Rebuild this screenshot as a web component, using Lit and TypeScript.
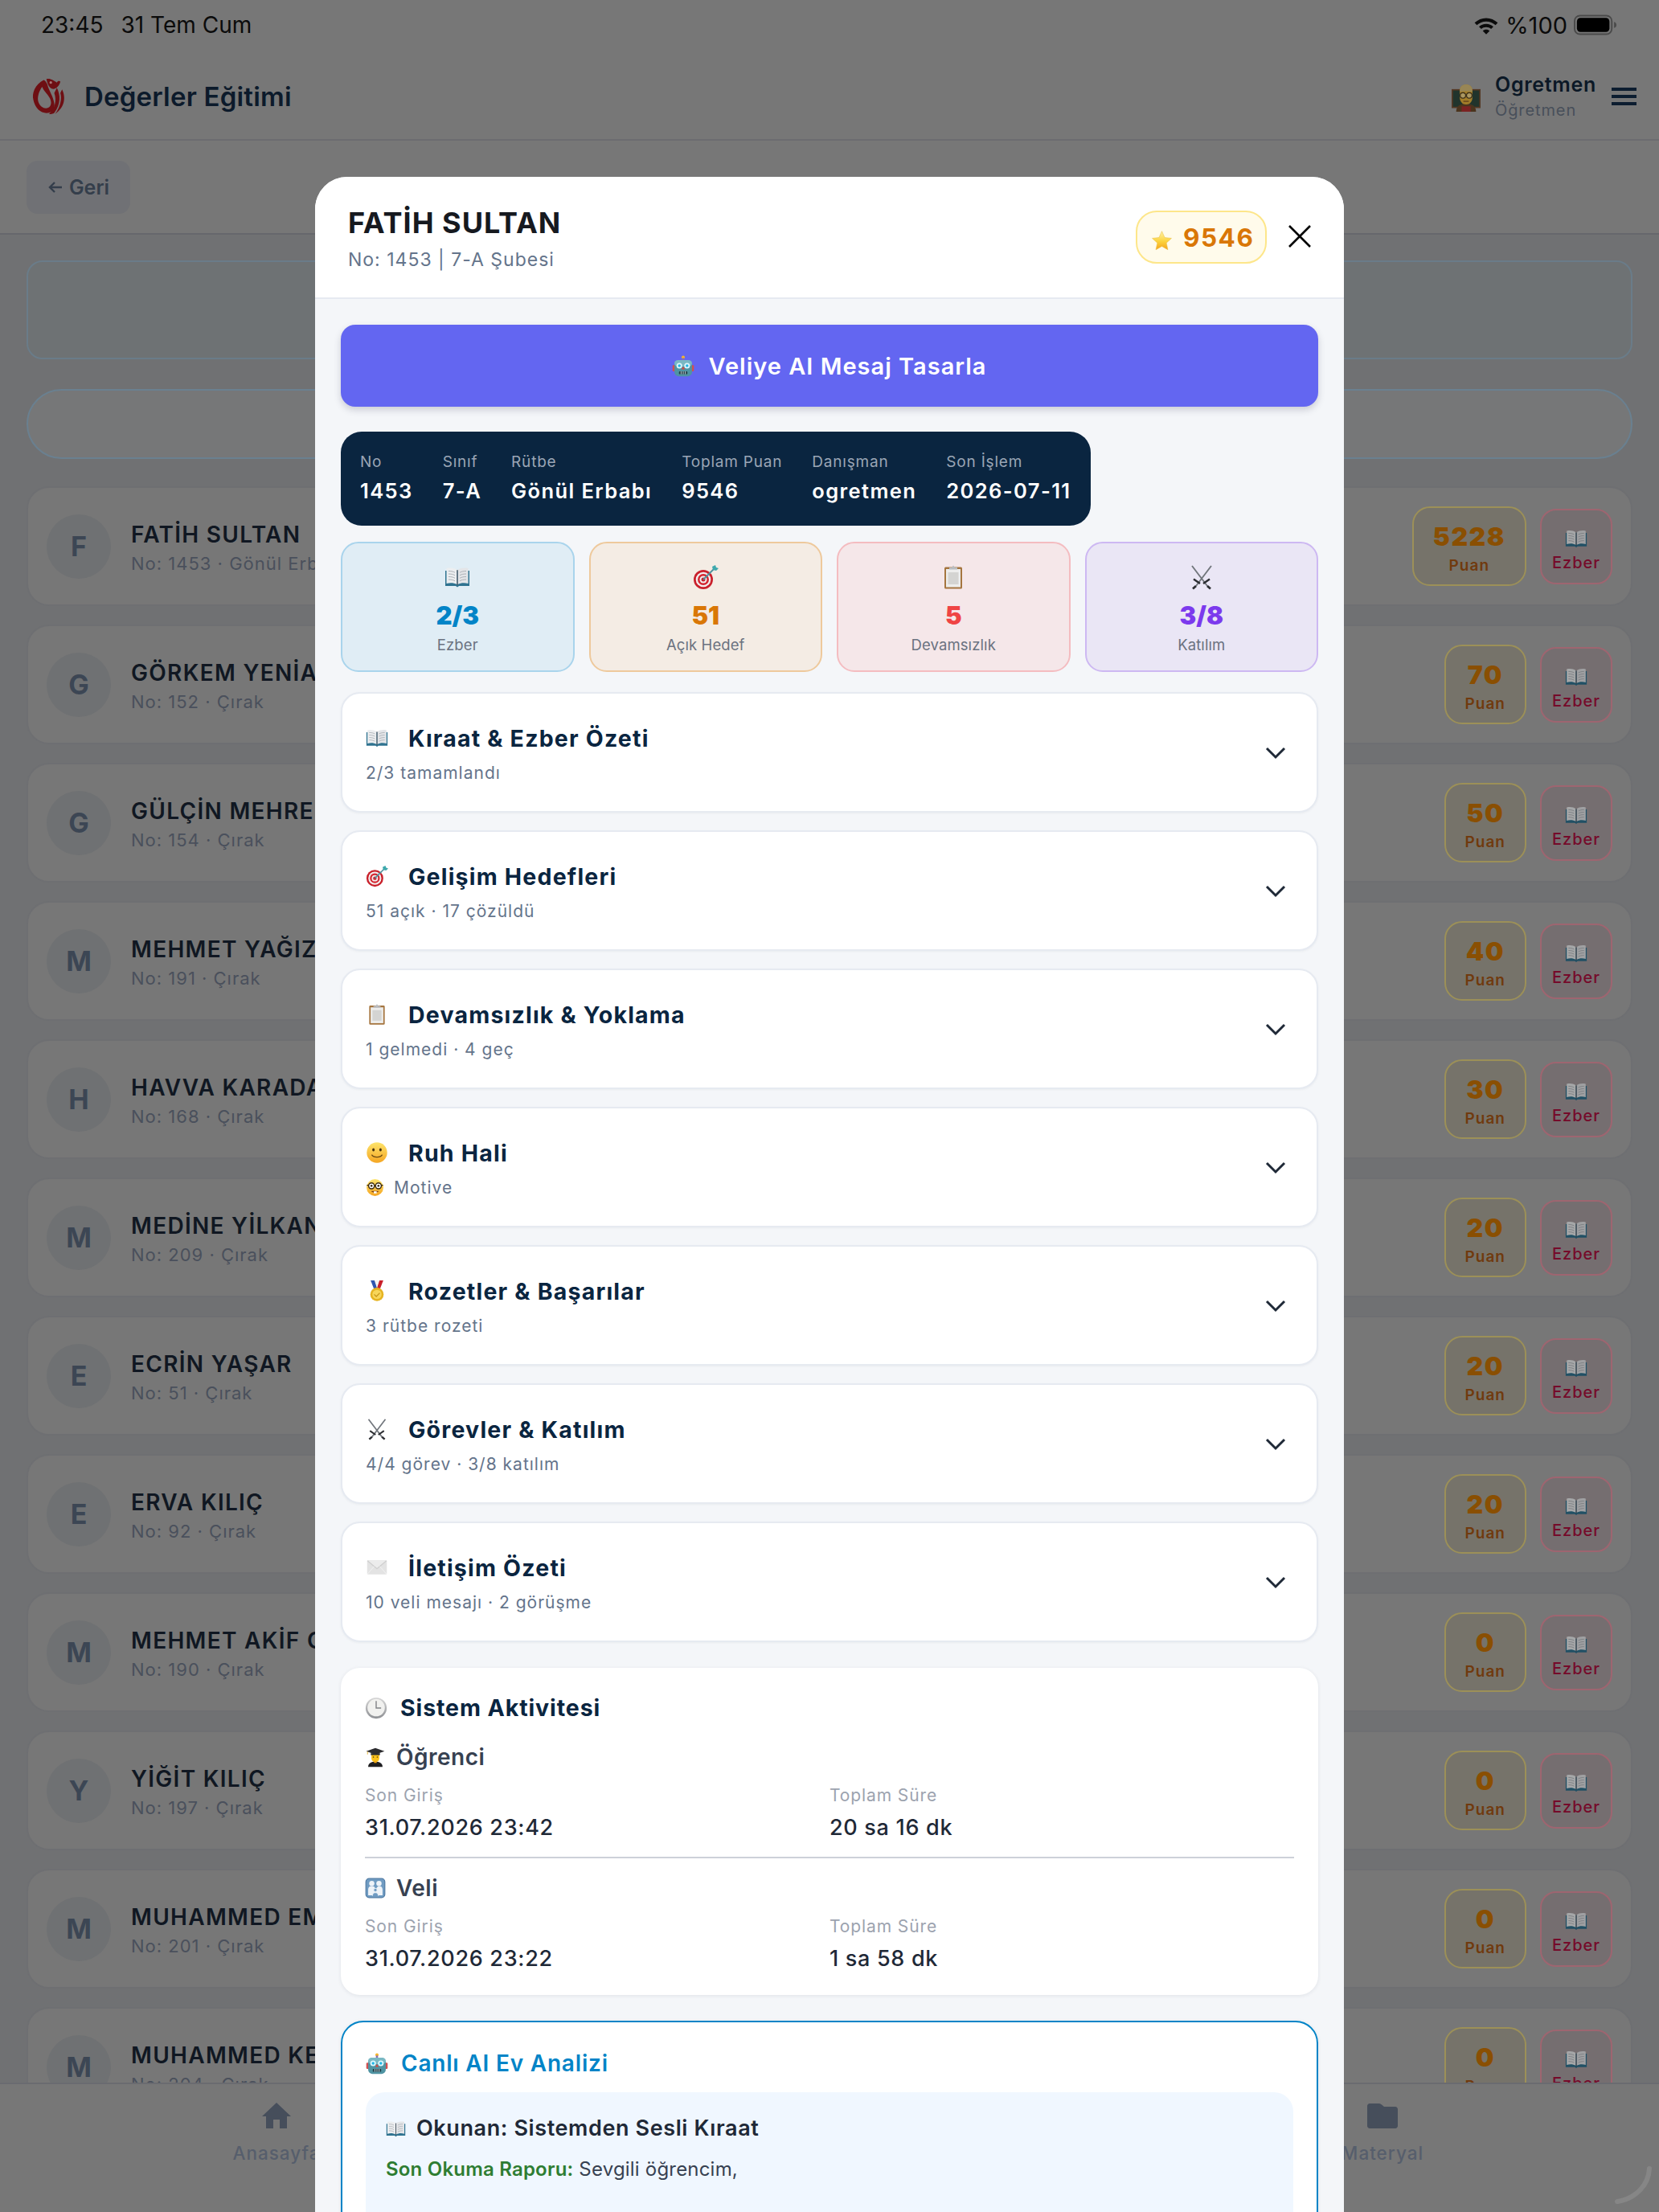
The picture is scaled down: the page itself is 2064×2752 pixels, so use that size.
import { LitElement, html, css, svg } from "lit";
import { customElement } from "lit/decorators.js";

const E = {
  book: svg`<path d="M1 8h30v19H18l-2 1.500-2-1.500H1z" fill="#2f7390"/><path d="M2.500 5C7 4 12 4.500 15.500 7v18C12 23 7 22.500 2.500 24z" fill="#eceef0"/><path d="M29.500 5C25 4 20 4.500 16.500 7v18c3.500-2 8.500-2.500 13-1z" fill="#e3e5e8"/><path d="M5 8.500c3 0 6 .5 8 1.800M5 12c3 0 6 .5 8 1.800M5 15.500c3 0 6 .5 8 1.800M5 19c3 0 6 .5 8 1.800M27 8.500c-3 0-6 .5-8 1.800M27 12c-3 0-6 .5-8 1.800M27 15.500c-3 0-6 .5-8 1.800M27 19c-3 0-6 .5-8 1.800" stroke="#a5a9b0" stroke-width=".9" fill="none"/><path d="M16 7v19" stroke="#4b5460" stroke-width="1.200"/>`,
  target: svg`<circle cx="13" cy="19" r="12" fill="#c9202b"/><circle cx="13" cy="19" r="9.300" fill="#f3eeee"/><circle cx="13" cy="19" r="7" fill="#d5252f"/><circle cx="13" cy="19" r="4.500" fill="#f3eeee"/><circle cx="13" cy="19" r="2.500" fill="#c9202b"/><path d="M13 19 26 6" stroke="#4e8f9b" stroke-width="1.800"/><path d="M24 3l1 4 4 1 3-3-3-1-1-3z" fill="#3fa9ad"/>`,
  clip: svg`<rect x="5" y="3.500" width="22" height="27" rx="1.500" fill="#a5753f"/><rect x="7" y="6" width="18" height="22.500" fill="#ededec"/><rect x="9.500" y="10" width="13" height="15" fill="#d4d4d2"/><path d="M11 6V4h3l2-2.500L18 4h3v2.500H11z" fill="#b9bcc0"/>`,
  swords: svg`<path d="M4 2 23 27M28 2 9 27" stroke="#70757b" stroke-width="1.900" fill="none"/><path d="M18 24l8-5.500M14 24 6 18.500" stroke="#2b2d31" stroke-width="2.400"/><path d="M23 27l4 3.500M9 27l-4 3.500" stroke="#2b2d31" stroke-width="2.800"/>`,
  smile: svg`<defs><linearGradient id="gs" x1="0" y1="0" x2="0" y2="1"><stop offset="0" stop-color="#fde36a"/><stop offset="1" stop-color="#f5a623"/></linearGradient></defs><circle cx="16" cy="16" r="14.500" fill="url(#gs)"/><ellipse cx="11" cy="12" rx="1.700" ry="2.200" fill="#4a3410"/><ellipse cx="21" cy="12" rx="1.700" ry="2.200" fill="#4a3410"/><path d="M8.500 19c3 4.500 12 4.500 15 0" stroke="#6b4a12" stroke-width="1.500" fill="none"/>`,
  nerd: svg`<defs><linearGradient id="gn" x1="0" y1="0" x2="0" y2="1"><stop offset="0" stop-color="#fde36a"/><stop offset="1" stop-color="#f5a623"/></linearGradient></defs><circle cx="16" cy="16" r="14.500" fill="url(#gn)"/><circle cx="10" cy="13" r="5" fill="#fff" stroke="#3a2a10" stroke-width="2"/><circle cx="22" cy="13" r="5" fill="#fff" stroke="#3a2a10" stroke-width="2"/><path d="M15 13h2M2 12h3M27 12h3" stroke="#3a2a10" stroke-width="2"/><circle cx="10" cy="13" r="1.800" fill="#3a2a10"/><circle cx="22" cy="13" r="1.800" fill="#3a2a10"/><path d="M9 22c4 4 10 4 14 0z" fill="#7a3c14"/><rect x="14" y="22.500" width="5" height="3.500" fill="#fff"/>`,
  medal: svg`<path d="M7 1h6l4 13h-5z" fill="#2f56b0"/><path d="M25 1h-6l-4 13h5z" fill="#c9202b"/><path d="M12.500 1h7L16 12z" fill="#f2f2f2"/><circle cx="16" cy="21" r="9.500" fill="#e6b422"/><circle cx="16" cy="21" r="6.500" fill="#f7d65a"/><path d="M12 21l3 3 5-5" stroke="#c9971a" stroke-width="1.500" fill="none"/>`,
  mail: svg`<rect x="2" y="6" width="28" height="20" rx="1.500" fill="#e3e3e3"/><path d="M2.500 6.500 16 18 29.500 6.500" stroke="#cfcfcf" stroke-width="1.500" fill="#ececec"/><path d="M2.500 25.500 12 14.500M29.500 25.500 20 14.500" stroke="#f4f4f4" stroke-width="1"/>`,
  clock: svg`<defs><linearGradient id="gc" x1="0" y1="0" x2="0" y2="1"><stop offset="0" stop-color="#d8d8d8"/><stop offset="1" stop-color="#8e9094"/></linearGradient></defs><circle cx="16" cy="16" r="15" fill="url(#gc)"/><circle cx="16" cy="15.500" r="12.300" fill="#f1f1ef"/><path d="M16 6v10h7" stroke="#808286" stroke-width="1.600" fill="none"/>`,
  student: svg`<path d="M5 31c0-6 5-8 11-8s11 2 11 8z" fill="#1f1f22"/><path d="M10 11h12v7a6 6 0 0 1-12 0z" fill="#fcc21b"/><rect x="14" y="22" width="4" height="3" fill="#f0a818"/><path d="M16 2 2 7l14 5 14-5z" fill="#2c2c2f"/><path d="M9 10h14v3H9z" fill="#2c2c2f"/><path d="M4 7.500V12" stroke="#e0a818" stroke-width="1"/><circle cx="13" cy="16" r="1" fill="#4a3410"/><circle cx="19" cy="16" r="1" fill="#4a3410"/>`,
  family: svg`<rect x="1.500" y="1.500" width="29" height="29" rx="5" fill="#6f9bc2" stroke="#4f7aa3" stroke-width="1.500"/><circle cx="10.500" cy="9" r="4" fill="#eef3f8"/><circle cx="21.500" cy="9" r="4" fill="#eef3f8"/><path d="M5 27v-9c0-3 2-5 5.500-5s5.500 2 5.500 5 2-5 5.500-5 5.500 2 5.500 5v9z" fill="#eef3f8"/><circle cx="16" cy="19" r="2.600" fill="#6f9bc2" stroke="#eef3f8"/><path d="M11.500 28c0-3.500 2-5 4.500-5s4.500 1.500 4.500 5" fill="#6f9bc2" stroke="#eef3f8"/>`,
  robot: svg`<circle cx="16" cy="4" r="2.300" fill="#f5b52e"/><rect x="14.500" y="5" width="3" height="4" fill="#8b6fb0"/><rect x=".8" y="15" width="4" height="9" rx="1.500" fill="#d05050"/><rect x="27.200" y="15" width="4" height="9" rx="1.500" fill="#d05050"/><rect x="3.500" y="8" width="25" height="23" rx="6" fill="#4f94a3"/><rect x="3.500" y="8" width="25" height="9" rx="5" fill="#79b8c3"/><circle cx="10.500" cy="16" r="4" fill="#dff6fb"/><circle cx="21.500" cy="16" r="4" fill="#dff6fb"/><circle cx="10.500" cy="16" r="2" fill="#1fb6e6"/><circle cx="21.500" cy="16" r="2" fill="#1fb6e6"/><path d="M16 17l2.500 4h-5z" fill="#d9483f"/><rect x="10" y="24" width="12" height="4" rx="1" fill="#25434c"/><path d="M13 24v4M16 24v4M19 24v4" stroke="#cfd8dc" stroke-width="1"/>`,
  star: svg`<defs><linearGradient id="gst" x1="0" y1="0" x2="0" y2="1"><stop offset="0" stop-color="#fff3a8"/><stop offset=".55" stop-color="#fcd33d"/><stop offset="1" stop-color="#f5a41d"/></linearGradient></defs><path d="M16 2l4.200 9.300 10 1.100-7.500 6.800 2.100 10L16 24.200 7.200 29.200l2.100-10-7.500-6.800 10-1.100z" fill="url(#gst)" stroke="#e8b93a" stroke-width=".6"/>`,
  teacher: svg`<rect x="0" y="7" width="32" height="21" fill="#7a5233"/><rect x="1.500" y="8.500" width="29" height="18" fill="#2f4a3f"/><path d="M5 32c0-7 5-9 11-9s11 2 11 9z" fill="#6b4a2a"/><rect x="11" y="26" width="10" height="6" fill="#b03030"/><path d="M9 9c0-5 3-7 7-7s7 2 7 7v7c0 5-3 8-7 8s-7-3-7-8z" fill="#e8b23a"/><path d="M9 10c0-6 3-8 7-8s7 2 7 8c-4-1-10-1-14 0z" fill="#d9c07a"/><circle cx="12.500" cy="14" r="3" fill="#f6d98a" stroke="#4a3a20"/><circle cx="19.500" cy="14" r="3" fill="#f6d98a" stroke="#4a3a20"/><path d="M13 20.500h6" stroke="#7a4a20" stroke-width="1"/>`,
};
type EK = keyof typeof E;
const emo = (k: EK, cls = "") => html`<svg class="emo ${cls}" viewBox="0 0 32 32" aria-hidden="true">${E[k]}</svg>`;

const ROWS = [
  ["F", "FATİH SULTAN", "No: 1453 · Gönül Erbabı", "5228"],
  ["G", "GÖRKEM YENİAY", "No: 152 · Çırak", "70"],
  ["G", "GÜLÇİN MEHREN", "No: 154 · Çırak", "50"],
  ["M", "MEHMET YAĞIZ", "No: 191 · Çırak", "40"],
  ["H", "HAVVA KARADAĞ", "No: 168 · Çırak", "30"],
  ["M", "MEDİNE YİLKAN", "No: 209 · Çırak", "20"],
  ["E", "ECRİN YAŞAR", "No: 51 · Çırak", "20"],
  ["E", "ERVA KILIÇ", "No: 92 · Çırak", "20"],
  ["M", "MEHMET AKİF G", "No: 190 · Çırak", "0"],
  ["Y", "YİĞİT KILIÇ", "No: 197 · Çırak", "0"],
  ["M", "MUHAMMED EM", "No: 201 · Çırak", "0"],
  ["M", "MUHAMMED KE", "No: 204 · Çırak", "0"],
];
const INFO = [
  ["No", "1453"], ["Sınıf", "7-A"], ["Rütbe", "Gönül Erbabı"],
  ["Toplam Puan", "9546"], ["Danışman", "ogretmen"], ["Son İşlem", "2026-07-11"],
];
const STATS: [EK, string, string, string][] = [
  ["book", "2/3", "Ezber", "blue"],
  ["target", "51", "Açık Hedef", "orange"],
  ["clip", "5", "Devamsızlık", "red"],
  ["swords", "3/8", "Katılım", "purple"],
];
const ACC: [EK, string, any][] = [
  ["book", "Kıraat & Ezber Özeti", "2/3 tamamlandı"],
  ["target", "Gelişim Hedefleri", "51 açık · 17 çözüldü"],
  ["clip", "Devamsızlık & Yoklama", "1 gelmedi · 4 geç"],
  ["smile", "Ruh Hali", html`${emo("nerd", "e-nerd")}Motive`],
  ["medal", "Rozetler & Başarılar", "3 rütbe rozeti"],
  ["swords", "Görevler & Katılım", "4/4 görev · 3/8 katılım"],
  ["mail", "İletişim Özeti", "10 veli mesajı · 2 görüşme"],
];

@customElement("app-root")
export class AppRoot extends LitElement {
  static styles = css`
    :host { display: block; width: 2064px; height: 2752px; position: relative; overflow: hidden; font-family: Inter, "Noto Sans", sans-serif; background: #707173; }
    * { box-sizing: border-box; }
    svg { display: block; flex: none; }
    .emo { width: 28px; height: 28px; }
    .dim { filter: brightness(.7); }

    .page { height: 100%; display: flex; flex-direction: column; }
    .status { height: 62px; flex: none; background: #777; display: flex; align-items: center; justify-content: space-between; padding: 0 52px 0 51px; color: #0b0b0b; font-size: 28px; }
    .status .left { display: flex; gap: 22px; }
    .status .right { display: flex; align-items: center; gap: 8px; font-size: 29px; }
    .wifi { width: 32px; height: 26px; }
    .batt { width: 54px; height: 26px; }
    .top { height: 113px; flex: none; background: #777; border-bottom: 2px solid #6c6c70; display: flex; align-items: center; padding: 4px 28px 0 38px; }
    .logo { width: 46px; height: 52px; margin-right: 21px; }
    .brand { font-size: 33px; font-weight: 600; color: #0c1a2b; letter-spacing: .2px; }
    .user { margin-left: auto; display: flex; align-items: center; }
    .e-teacher { width: 36px; height: 36px; margin-right: 18px; margin-top: 2px; }
    .uname { font-size: 25px; font-weight: 600; color: #0b1826; letter-spacing: .7px; }
    .urole { font-size: 20px; color: #484f5a; letter-spacing: .9px; margin-top: 5px; }
    .burger { width: 31px; margin-left: 19px; height: 22px; display: flex; flex-direction: column; justify-content: space-between; }
    .burger i { display: block; height: 4px; background: #0c1d30; }
    .sub { height: 117px; flex: none; background: #777; border-bottom: 2px solid #66676c; display: flex; align-items: center; padding: 0 33px; }
    .back { width: 129px; height: 66px; border-radius: 14px; background: #707175; color: #343e4b; font-size: 25px; font-weight: 600; display: flex; align-items: center; justify-content: center; gap: 7px; }
    .back svg { width: 20px; height: 20px; }
    .main { flex: 1; min-height: 0; overflow: hidden; padding: 32px 33px 0; }
    .note { height: 123px; border-radius: 20px; border: 2px solid #6a7c89; background: #6e7274; }
    .pill { height: 87px; margin-top: 37px; border-radius: 44px; border: 2px solid #6a8090; background: #767778; }
    .list { margin-top: 34px; display: flex; flex-direction: column; gap: 23px; }
    .row { height: 149px; flex: none; border-radius: 28px; background: #777; border: 2px solid #6e6f72; display: flex; align-items: center; padding: 0 23px; }
    .ava { width: 80px; height: 80px; border-radius: 50%; background: #6f7173; color: #3c4654; font-size: 34px; font-weight: 700; display: flex; align-items: center; justify-content: center; flex: none; }
    .rt { margin-left: 25px; }
    .rn { font-size: 28px; font-weight: 600; letter-spacing: 1.300px; color: #101722; margin-top: 2px; }
    .rs { font-size: 22px; color: #4a505c; letter-spacing: 1px; margin-top: 6px; }
    .acts { margin-left: auto; display: flex; align-items: center; gap: 17px; }
    .pts { min-width: 98px; height: 99px; padding: 4px 24px 0; border: 2px solid #9c9058; border-radius: 22px; background: #76736a; display: flex; flex-direction: column; align-items: center; justify-content: center; }
    .pts b { font-size: 32px; font-weight: 900; color: #8a4f02; letter-spacing: 1.500px; }
    .pts span { font-size: 19px; font-weight: 600; color: #703a0e; letter-spacing: 1px; margin-top: 5px; }
    .ezb { width: 90px; height: 94px; padding-top: 8px; border: 2px solid #9e6570; border-radius: 20px; background: #756e70; display: flex; flex-direction: column; align-items: center; justify-content: center; color: #750a2a; font-size: 20px; font-weight: 500; letter-spacing: 1px; gap: 4px; }
    .nav { height: 161px; flex: none; background: #777; border-top: 2px solid #6a6b70; display: grid; grid-template-columns: repeat(5, 344px); padding: 0 172px; position: relative; }
    .ni { display: flex; flex-direction: column; align-items: center; padding-top: 22px; color: #565e6c; font-size: 22.500px; font-weight: 500; letter-spacing: 1px; gap: 16px; }
    .ni svg { width: 38px; height: 34px; }
    .arc { position: absolute; right: 8px; bottom: 8px; width: 50px; height: 50px; }

    .modal { position: absolute; left: 392px; top: 220px; width: 1280px; height: 2700px; background: #f4f6f9; border-radius: 40px 40px 0 0; overflow: hidden; }
    .mh { height: 152px; background: #fff; border-bottom: 2px solid #e6eaf1; display: flex; align-items: center; padding: 0 40px 0 41px; }
    .mt { font-size: 36px; font-weight: 700; color: #16191f; letter-spacing: 1px; margin-top: 2px; }
    .ms { font-size: 23px; color: #64748b; letter-spacing: 1px; margin-top: 10px; }
    .badge { margin-left: auto; width: 163px; height: 66px; border-radius: 26px; border: 2px solid #fde68a; background: #fffbeb; color: #d97706; font-size: 31.500px; font-weight: 700; letter-spacing: 1.500px; display: flex; align-items: center; padding-left: 17px; gap: 13px; margin-top: 0; }
    .badge .emo { width: 27px; height: 27px; margin-top: 8px; }
    .close { width: 30px; height: 30px; margin-left: 26px; margin-top: -2px; }
    .mb { padding: 32px 32px 0; display: flex; flex-direction: column; }
    .aibtn { height: 102px; border-radius: 18px; background: #6366f1; color: #fff; font-size: 29px; font-weight: 600; letter-spacing: 1px; display: flex; align-items: center; justify-content: center; gap: 17px; box-shadow: 0 4px 8px rgba(60,60,90,.22); }
    .info { align-self: flex-start; margin-top: 31px; background: #0a2540; border-radius: 26px; padding: 26px 24px; height: 117px; display: flex; gap: 37px; }
    .il { font-size: 19px; color: #9aa5b5; letter-spacing: .8px; }
    .iv { font-size: 25.500px; font-weight: 600; color: #fff; letter-spacing: 1.400px; margin-top: 9px; white-space: nowrap; }
    .stats { margin-top: 20px; display: grid; grid-template-columns: repeat(4, 1fr); gap: 18px; }
    .st { height: 162px; border-radius: 22px; border: 2px solid; display: flex; flex-direction: column; align-items: center; padding-top: 26px; }
    .st .emo { width: 32px; height: 32px; }
    .st b { font-size: 31px; font-weight: 900; line-height: 40px; margin-top: 12px; }
    .st span { font-size: 18.500px; color: #6b7280; margin-top: 5px; letter-spacing: .1px; }
    .blue { background: #e0edf5; border-color: #a9d4ec; } .blue b { color: #0284c7; }
    .orange { background: #f4ece4; border-color: #eec99c; } .orange b { color: #d97706; }
    .red { background: #f5e7e9; border-color: #f4bcc0; } .red b { color: #ef4444; }
    .purple { background: #eae6f5; border-color: #cdb8f2; } .purple b { color: #7c3aed; }
    .accs { margin-top: 25px; display: flex; flex-direction: column; gap: 22px; }
    .acc { height: 150px; border-radius: 24px; background: #fff; border: 2px solid #e6eaf1; display: flex; align-items: center; justify-content: space-between; padding: 2px 38px 0 29px; box-shadow: 0 1px 3px rgba(20,30,50,.05); }
    .at { display: flex; align-items: center; gap: 25px; font-size: 28.500px; font-weight: 700; color: #0a2540; letter-spacing: 1.200px; }
    .as { display: flex; align-items: center; font-size: 21px; color: #64748b; letter-spacing: 1px; margin-top: 13px; }
    .e-nerd { width: 23px; height: 23px; margin-right: 12px; }
    .chev { width: 26px; height: 16px; }
    .card { margin-top: 32px; border-radius: 24px; background: #fff; box-shadow: 0 1px 5px rgba(20,30,50,.09); padding: 0 30px; }
    .sys { height: 407px; padding-top: 32px; }
    .ct { display: flex; align-items: center; gap: 16px; font-size: 28.500px; font-weight: 700; letter-spacing: .9px; color: #0a2540; line-height: 36px; }
    .sh { display: flex; align-items: center; gap: 13px; font-size: 28px; font-weight: 600; color: #374151; line-height: 34px; letter-spacing: .5px; }
    .sh .emo { width: 26px; height: 28px; }
    .sh.first { margin-top: 26px; }
    .sg { display: grid; grid-template-columns: 1fr 1fr; margin-top: 17px; }
    .sl { font-size: 21px; color: #9ca3af; letter-spacing: .9px; line-height: 28px; }
    .sv { font-size: 27px; font-weight: 500; color: #1f2937; letter-spacing: .7px; line-height: 34px; margin-top: 9px; }
    .hr { height: 2px; background: #cdd1d9; margin: 19px 0 20px; }
    .ai { border: 2px solid #0284c7; border-radius: 28px; padding: 33px 29px; margin-top: 32px; height: 600px; }
    .ai .ct { color: #0284c7; font-size: 28px; font-weight: 600; letter-spacing: .8px; }
    .inner { margin-top: 18px; background: #f0f7ff; border-radius: 24px; padding: 28px 25px; height: 500px; }
    .ih { display: flex; align-items: center; gap: 13px; font-size: 27px; font-weight: 600; color: #1f2937; letter-spacing: .6px; line-height: 34px; }
    .ih .emo { width: 25px; height: 25px; }
    .ir { margin-top: 17px; font-size: 24px; color: #374151; line-height: 34px; letter-spacing: .2px; }
    .ir b { color: #2e7d32; font-weight: 600; }
  `;

  render() {
    return html`
      <div class="page">
        <div class="status">
          <div class="left"><span>23:45</span><span>31 Tem Cum</span></div>
          <div class="right">
            <svg class="wifi" viewBox="0 0 30 24"><path d="M15 4C9.800 4 5.200 6.100 1.500 9.500l2.600 2.700C7 9.500 10.800 7.900 15 7.900s8 1.600 10.900 4.300l2.600-2.700C24.800 6.100 20.200 4 15 4zm0 6.800c-3.300 0-6.200 1.300-8.400 3.300l2.700 2.700c1.500-1.400 3.500-2.200 5.700-2.200s4.200.8 5.700 2.200l2.700-2.700c-2.200-2-5.100-3.300-8.400-3.300zm0 6.700c-1.600 0-3 .6-4 1.600l4 4 4-4c-1-1-2.400-1.600-4-1.600z" fill="#0b0b0b"/></svg>
            <span>%100</span>
            <svg class="batt" viewBox="0 0 56 26"><rect x="1" y="1" width="48" height="24" rx="7" fill="none" stroke="#4a4a4a" stroke-width="2"/><rect x="4" y="4" width="42" height="18" rx="4.500" fill="#000"/><path d="M52 9c2 .5 3 2 3 4s-1 3.500-3 4z" fill="#4a4a4a"/></svg>
          </div>
        </div>
        <div class="top">
          <svg class="logo" viewBox="10 10 42 48">
            <path fill-rule="evenodd" fill="#6e0f13" d="M25 15C15 20 11 30 13 38c2 10 9 16 17 15 5-1 8-5 7-11-1-8-6-14-8-22-1-2-2-4-4-5zM23 23c-4 6-6 13-4 18 2 5 7 8 11 6 4-2 4-7 2-11-3-5-7-8-9-13z"/>
            <path fill="#6e0f13" d="M40 24c4 8 5 18-3 29-3 2-5 1-6 1 7-6 9-16 6-24zM46 26c4 8 4 20-8 28 6-8 8-18 6-24z"/>
            <path fill="#6e0f13" d="M28 14c5-1 8 2 12 4 1-2 3-2 4-1-1 5-6 10-10 8-4-2-5-7-6-11z"/>
            <circle cx="33" cy="18" r="1.500" fill="#a87474"/>
          </svg>
          <div class="brand">Değerler Eğitimi</div>
          <div class="user">
            ${emo("teacher", "e-teacher dim")}
            <div><div class="uname">Ogretmen</div><div class="urole">Öğretmen</div></div>
            <div class="burger"><i></i><i></i><i></i></div>
          </div>
        </div>
        <div class="sub">
          <div class="back">
            <svg viewBox="0 0 20 20"><path d="M18 10H3M9 4l-6 6 6 6" fill="none" stroke="#343e4b" stroke-width="2.400"/></svg>Geri
          </div>
        </div>
        <div class="main">
          <div class="note"></div>
          <div class="pill"></div>
          <div class="list">
            ${ROWS.map(r => html`
              <div class="row">
                <div class="ava">${r[0]}</div>
                <div class="rt"><div class="rn">${r[1]}</div><div class="rs">${r[2]}</div></div>
                <div class="acts">
                  <div class="pts"><b>${r[3]}</b><span>Puan</span></div>
                  <div class="ezb">${emo("book", "dim")}<span>Ezber</span></div>
                </div>
              </div>`)}
          </div>
        </div>
        <div class="nav">
          <div class="ni">
            <svg viewBox="0 0 38 34"><path d="M19 1 1 18h5v15h9V22h8v11h9V18h5z" fill="#464e5b"/></svg>Anasayfa
          </div>
          <div class="ni"></div><div class="ni"></div><div class="ni"></div>
          <div class="ni">
            <svg viewBox="0 0 38 34"><path d="M3 2h12c1 0 2 .5 3 1.500L21 6h14c1.500 0 3 1.500 3 3v21c0 1.500-1.500 3-3 3H3c-1.500 0-3-1.500-3-3V5c0-1.500 1.500-3 3-3z" fill="#464e5b"/></svg>Materyal
          </div>
          <svg class="arc" viewBox="0 0 50 50"><path d="M46 4C45 24 30 41 6 45" fill="none" stroke="#868686" stroke-width="6" stroke-linecap="round"/></svg>
        </div>
      </div>

      <div class="modal">
        <div class="mh">
          <div>
            <div class="mt">FATİH SULTAN</div>
            <div class="ms">No: 1453 | 7-A Şubesi</div>
          </div>
          <div class="badge">${emo("star")}<span>9546</span></div>
          <svg class="close" viewBox="0 0 30 30"><path d="M2 2l26 26M28 2 2 28" stroke="#000" stroke-width="2.600"/></svg>
        </div>
        <div class="mb">
          <div class="aibtn">${emo("robot")}<span>Veliye AI Mesaj Tasarla</span></div>
          <div class="info">
            ${INFO.map(i => html`<div><div class="il">${i[0]}</div><div class="iv">${i[1]}</div></div>`)}
          </div>
          <div class="stats">
            ${STATS.map(s => html`<div class="st ${s[3]}">${emo(s[0])}<b>${s[1]}</b><span>${s[2]}</span></div>`)}
          </div>
          <div class="accs">
            ${ACC.map(a => html`
              <div class="acc">
                <div>
                  <div class="at">${emo(a[0])}<span>${a[1]}</span></div>
                  <div class="as">${a[2]}</div>
                </div>
                <svg class="chev" viewBox="0 0 26 16"><path d="M2 2l11 11L24 2" fill="none" stroke="#1f2937" stroke-width="3"/></svg>
              </div>`)}
          </div>
          <div class="card sys">
            <div class="ct">${emo("clock")}<span>Sistem Aktivitesi</span></div>
            <div class="sh first">${emo("student")}<span>Öğrenci</span></div>
            <div class="sg">
              <div><div class="sl">Son Giriş</div><div class="sv">31.07.2026 23:42</div></div>
              <div><div class="sl">Toplam Süre</div><div class="sv">20 sa 16 dk</div></div>
            </div>
            <div class="hr"></div>
            <div class="sh">${emo("family")}<span>Veli</span></div>
            <div class="sg">
              <div><div class="sl">Son Giriş</div><div class="sv">31.07.2026 23:22</div></div>
              <div><div class="sl">Toplam Süre</div><div class="sv">1 sa 58 dk</div></div>
            </div>
          </div>
          <div class="card ai">
            <div class="ct">${emo("robot")}<span>Canlı AI Ev Analizi</span></div>
            <div class="inner">
              <div class="ih">${emo("book")}<span>Okunan: Sistemden Sesli Kıraat</span></div>
              <div class="ir"><b>Son Okuma Raporu:</b> Sevgili öğrencim,</div>
            </div>
          </div>
        </div>
      </div>
    `;
  }
}
